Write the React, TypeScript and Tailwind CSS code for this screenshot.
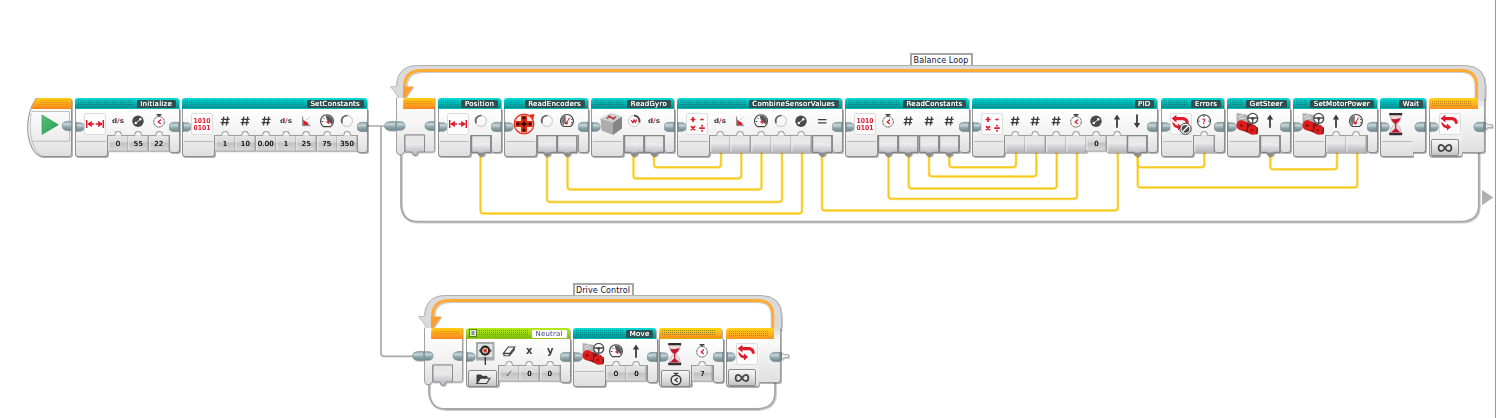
import type { ReactNode } from 'react';

type PortKind = 'value' | 'in' | 'out';
type Port = { icon: string; kind: PortKind; value?: string };
type Theme = 'teal' | 'green' | 'orange';
type BlockData = {
  x: number;
  y: number;
  w: number;
  title?: string;
  theme: Theme;
  main: string;
  ports: Port[];
  mode?: string;
};

const RED = '#e01b2c';
const INK = '#3c3c3c';

const v = (icon: string, value: string): Port => ({ icon, kind: 'value', value });
const i = (icon: string): Port => ({ icon, kind: 'in' });
const o = (icon: string): Port => ({ icon, kind: 'out' });

const TOP = 98;
const LOW = 328;

const blocks: BlockData[] = [
  { x: 75, y: TOP, w: 103.5, title: 'Initialize', theme: 'teal', main: 'range', ports: [v('ds', '0'), v('gain', '55'), v('timer', '22')] },
  { x: 182, y: TOP, w: 184.5, title: 'SetConstants', theme: 'teal', main: 'binary', ports: [v('hash', '1'), v('hash', '10'), v('hash', '0.00'), v('ds', '1'), v('angle', '25'), v('gauge', '75'), v('ring', '350')] },
  { x: 437.7, y: TOP, w: 63, title: 'Position', theme: 'teal', main: 'range', ports: [o('ring')] },
  { x: 504, y: TOP, w: 83.5, title: 'ReadEncoders', theme: 'teal', main: 'encoder', ports: [o('ring'), o('speed')] },
  { x: 590.5, y: TOP, w: 83, title: 'ReadGyro', theme: 'teal', main: 'gyro', ports: [o('rate'), o('ds')] },
  { x: 677, y: TOP, w: 164.5, title: 'CombineSensorValues', theme: 'teal', main: 'math', ports: [i('ds'), i('angle'), i('gauge'), i('ring'), i('gain'), o('equals')] },
  { x: 845, y: TOP, w: 124, title: 'ReadConstants', theme: 'teal', main: 'binary', ports: [o('timer'), o('hash'), o('hash'), o('hash')] },
  { x: 972, y: TOP, w: 185, title: 'PID', theme: 'teal', main: 'math', ports: [i('hash'), i('hash'), i('hash'), i('timer'), v('gain', '0'), i('up'), o('down')] },
  { x: 1160.7, y: TOP, w: 63, title: 'Errors', theme: 'teal', main: 'loopstop', ports: [i('question')] },
  { x: 1227, y: TOP, w: 62.5, title: 'GetSteer', theme: 'teal', main: 'steer', ports: [o('up')] },
  { x: 1293, y: TOP, w: 83.5, title: 'SetMotorPower', theme: 'teal', main: 'steer', ports: [i('up'), i('speed')] },
  { x: 1379.7, y: TOP, w: 46, title: 'Wait', theme: 'teal', main: 'hourglass', ports: [] },
  { x: 466, y: LOW, w: 103.5, title: 'Neutral', theme: 'green', main: 'display', mode: 'folder', ports: [v('eraser', '✓'), v('x', '0'), v('y', '0')] },
  { x: 573, y: LOW, w: 83, title: 'Move', theme: 'teal', main: 'steer', ports: [v('gauge', '0'), v('up', '0')] },
  { x: 659.3, y: LOW, w: 63, theme: 'orange', main: 'hourglass', mode: 'timer', ports: [v('timer', '7')] },
];

const wires: number[][] = [
  [480.5, 213.5, 802], [547, 202, 782], [567.5, 189.5, 761.5], [633.5, 178.5, 741.3], [654, 167.3, 721],
  [822, 210.5, 1117.8], [888.5, 198.8, 1077], [908.7, 188.5, 1056.7], [929, 176.5, 1036.3], [949.3, 167.3, 1016],
  [1137.7, 167.3, 1204.3], [1137.7, 187.5, 1357.3], [1270.3, 169.3, 1337],
];

const headerTheme: Record<Theme, string> = {
  teal: 'from-[#0adcd8] via-[#00b8b6] to-[#008f8f]',
  green: 'from-[#b6ea1c] via-[#9edb18] to-[#78bb0c]',
  orange: 'from-[#ffd800] via-[#ffb81a] to-[#ff8a18]',
};

function Tile({ children }: { children?: ReactNode }) {
  return (
    <>
      <rect x="0.5" y="0.5" width="21" height="21" rx="1.5" fill="#fdfdfd" stroke="#d4d4d4" strokeWidth="0.8" />
      {children}
    </>
  );
}

function LoopArrows() {
  return (
    <g fill={RED}>
      <path d="M6.4 1.8 V4 H13.5 Q18.8 4.6 18.8 10.8 L16 10.8 Q15.6 7.4 13 7.2 H6.4 V9.4 L1.6 5.6 Z" />
      <path d="M2 8.8 L4.6 10.6 Q5.4 12.4 8 12.6 V10.4 L12 14 L8 17.4 V15.4 Q3.4 15.2 2 8.8 Z" />
    </g>
  );
}

function MainIcon({ name }: { name: string }) {
  let art: ReactNode = null;
  if (name === 'range')
    art = (
      <Tile>
        <g stroke={RED} strokeWidth="1.5" fill="none">
          <path d="M2.7 7 V15 M19.3 7 V15 M4 11 H10.2 M11.8 11 H18" />
        </g>
        <path d="M3.4 11 L7.8 7.8 V14.2 Z M18.6 11 L14.2 7.8 V14.2 Z" fill={RED} />
      </Tile>
    );
  if (name === 'binary')
    art = (
      <Tile>
        <text x="11" y="9.7" textAnchor="middle" fontSize="6.8" fontWeight="700" fill={RED} textLength="17" lengthAdjust="spacingAndGlyphs">1010</text>
        <text x="11" y="17.3" textAnchor="middle" fontSize="6.8" fontWeight="700" fill={RED} textLength="17" lengthAdjust="spacingAndGlyphs">0101</text>
      </Tile>
    );
  if (name === 'math')
    art = (
      <Tile>
        <g stroke={RED} strokeWidth="1.7">
          <path d="M4.5 6.5 H9.5 M7 4 V9 M14.3 6.5 H17.7 M5 13.2 L9 17.2 M9 13.2 L5 17.2 M13.2 15.2 H18.8" />
        </g>
        <circle cx="16" cy="12.7" r="1" fill={RED} />
        <circle cx="16" cy="17.7" r="1" fill={RED} />
      </Tile>
    );
  if (name === 'encoder')
    art = (
      <>
        <circle cx="11" cy="11" r="9.8" fill="#fbe2da" stroke="#e5311d" strokeWidth="1.3" />
        <path d="M8 2.4 H14 V8 H19.6 V14 H14 V19.6 H8 V14 H2.4 V8 H8 Z" fill="#e52b13" />
        <g fill="#3a0a06">
          <circle cx="11" cy="4.9" r="1.7" />
          <circle cx="4.9" cy="11" r="1.7" />
          <circle cx="17.1" cy="11" r="1.7" />
          <circle cx="11" cy="17.1" r="1.7" />
          <circle cx="11" cy="11" r="2.1" />
          <path d="M10.4 7.4 H11.6 V10.4 H14.6 V11.6 H11.6 V14.6 H10.4 V11.6 H7.4 V10.4 H10.4 Z" />
        </g>
        <path d="M16.2 1.8 L21.5 1 L20.2 6.6 Z" fill="#e52b13" />
      </>
    );
  if (name === 'gyro')
    art = (
      <>
        <path d="M0.5 5.5 L11 0 L22 3.5 L13 9.5 Z" fill="#cfcfcf" />
        <path d="M0.5 5.5 L13 9.5 V22 L1.5 17.5 Z" fill="#adadad" />
        <path d="M13 9.5 L22 3.5 V15.5 L13 22 Z" fill="#858585" />
        <path d="M7 5.8 Q8 3 11 4.6 T16 3.6 M8.5 2.4 L14 6.4" stroke="#b52a2a" strokeWidth="1.2" fill="none" />
      </>
    );
  if (name === 'steer')
    art = (
      <>
        <path d="M0.5 0 L4 0.5 L12 2 L13 10 L6 13 L0.5 13 Z" fill="#b2b2b2" />
        <path d="M2 4 L7 2 M3 6 L9 4.5" stroke="#e9e9e9" strokeWidth="1" />
        <path d="M5 7.6 L11.6 9.6 L19.5 12.4 L20.5 20.5 L15 21 L5.5 17.2 Z" fill="#7f1717" />
        <path d="M6.4 8 L11.5 9.6 Q13 13 11.4 17.6 L6 17.4 Z" fill="#c62020" />
        <ellipse cx="5.4" cy="12.4" rx="5" ry="5.1" fill="#e01c1c" />
        <circle cx="5.2" cy="12.4" r="1.6" fill="#a01010" />
        <path d="M11.8 11 V18.4" stroke="#4b1a1a" strokeWidth="1" />
        <path d="M17 12.4 L21.4 14 Q22.6 17.6 21 21.6 L16.4 21.4 Z" fill="#b41c1c" />
        <ellipse cx="16.2" cy="17" rx="4.5" ry="4.7" fill="#e01c1c" />
        <circle cx="15.8" cy="17.2" r="1.5" fill="#a01010" />
        <path d="M21 14.5 Q22.2 17.8 20.8 21" stroke="#4b1a1a" strokeWidth="1" fill="none" />
        <g fill="none" stroke="#4a4a4a" strokeWidth="1.3">
          <circle cx="16.7" cy="5.4" r="5" fill="#fff" fillOpacity="0.85" />
          <path d="M12 5 H21.4 M16.7 5.6 V10" />
        </g>
        <circle cx="16.7" cy="5.5" r="1.5" fill="#4a4a4a" />
      </>
    );
  if (name === 'hourglass')
    art = (
      <g transform="translate(-4 0)">
        <rect x="4.2" y="0" width="13" height="2.6" rx="0.6" fill="#2e2e2e" />
        <rect x="4.2" y="19.6" width="13" height="2.6" rx="0.6" fill="#2e2e2e" />
        <path d="M5.4 2.6 H16 Q16 8.5 11.6 11 Q16 14 16 19.6 H5.4 Q5.4 14 9.9 11 Q5.4 8.5 5.4 2.6 Z" fill="#f2dddd" stroke="#b9a6a6" strokeWidth="0.7" />
        <path d="M6 5.5 Q10 7 15.5 5 Q14.5 9 11.3 10.8 V15.5 L15.6 19.5 H5.8 L10.1 15.5 V10.8 Q7 9 6 5.5 Z" fill="#c41632" />
      </g>
    );
  if (name === 'loop') art = <Tile><LoopArrows /></Tile>;
  if (name === 'loopstop')
    art = (
      <Tile>
        <LoopArrows />
        <circle cx="15.5" cy="15.8" r="5.6" fill="#fff" stroke="#3a3a3a" strokeWidth="1" />
        <circle cx="15.5" cy="15.8" r="3.9" fill="#4b4b4b" />
        <path d="M12.6 18.8 L18.4 12.8" stroke="#fff" strokeWidth="1.3" />
      </Tile>
    );
  if (name === 'display')
    art = (
      <>
        <rect x="1" y="-1" width="18.5" height="18.5" fill="#a4a9ac" />
        <rect x="3" y="1" width="14.5" height="13" fill="#dfe3e5" />
        <circle cx="10.2" cy="7.6" r="5.1" fill="#262626" />
        <path d="M4.2 7.6 H16.4" stroke="#262626" strokeWidth="1.6" />
        <circle cx="10.2" cy="7.6" r="2.9" fill="#f3ece9" />
        <rect x="8.5" y="5.7" width="3.4" height="3.8" rx="0.5" fill="#e53322" />
        <path d="M10.3 14 V22" stroke="#222" strokeWidth="1.2" />
      </>
    );
  return (
    <svg className="block h-[22px] w-[22px] shrink-0 overflow-visible font-['DejaVu_Sans',sans-serif]" viewBox="0 0 22 22">
      {art}
    </svg>
  );
}

function PortIcon({ name }: { name: string }) {
  let art: ReactNode = null;
  if (name === 'ds')
    art = (
      <text x="8" y="10.3" textAnchor="middle" fontSize="6.6" fontWeight="700" fill={INK} textLength="12" lengthAdjust="spacingAndGlyphs">
        d<tspan fill={RED}>/</tspan>s
      </text>
    );
  if (name === 'hash')
    art = <path d="M6.8 3.6 L5.4 12.4 M10.8 3.6 L9.4 12.4 M4.1 6.4 H12.6 M3.6 9.6 H12" stroke={INK} strokeWidth="1.4" />;
  if (name === 'equals') art = <path d="M4 6.6 H12.4 M4 9.8 H12.4" stroke={INK} strokeWidth="1.3" />;
  if (name === 'x' || name === 'y')
    art = <text x="8.3" y="11" textAnchor="middle" fontSize="10" fontWeight="700" fill={INK}>{name}</text>;
  if (name === 'up') art = <path d="M8 1.6 L11.2 6.6 H8.9 V14.8 H7.1 V6.6 H4.8 Z" fill={INK} />;
  if (name === 'down') art = <path d="M8 15 L11.2 10 H8.9 V1.4 H7.1 V10 H4.8 Z" fill={INK} />;
  if (name === 'gain')
    art = (
      <>
        <circle cx="8" cy="8.2" r="5.7" fill="#4a4a4a" />
        <path d="M5.6 10.3 L10.4 6.2" stroke="#fff" strokeWidth="0.9" />
        <circle cx="5.8" cy="10" r="1.2" fill="#fff" />
        <circle cx="10.3" cy="6.3" r="1.2" fill="#fff" />
      </>
    );
  if (name === 'timer')
    art = (
      <>
        <circle cx="8" cy="8.8" r="5.3" fill="#fff" stroke="#6a6462" strokeWidth="1" strokeDasharray="2.6 0.5" />
        <path d="M5.6 1.8 H10.4 M8 2 V3.8" stroke={INK} strokeWidth="1.4" />
        <path d="M10 6.6 L7.2 9 L9.8 11" stroke={RED} strokeWidth="1.3" fill="none" />
      </>
    );
  if (name === 'angle')
    art = (
      <>
        <path d="M4.6 3.4 V12.6 H12.2" stroke="#777" strokeWidth="0.9" fill="none" />
        <path d="M5.2 12 V6.2 L7.4 8.6 Q10.2 9 10.6 12 Z" fill={RED} />
        <path d="M8.6 7 L11.6 3.8" stroke="#999" strokeWidth="0.8" strokeDasharray="1.2 0.8" />
      </>
    );
  if (name === 'gauge')
    art = (
      <>
        <path d="M4.4 13.6 A6.5 6.5 0 1 1 11.6 13.6 Z" fill="#f9f9f9" stroke="#474747" strokeWidth="1.1" />
        <path d="M8 7.6 L6.6 2.6 A6 6 0 0 1 13 11.4 Z" fill="#555" />
        <path d="M6.4 5.6 L12.4 12.6 L8.2 10.6 Z" fill="#fff" />
        <path d="M6.8 8.8 L9.6 7.8 L10.4 11.4 Z" fill={RED} />
        <path d="M2.6 8.5 H4.4 M4.4 4.8 L5.4 6" stroke={INK} strokeWidth="0.9" />
      </>
    );
  if (name === 'speed')
    art = (
      <>
        <path d="M4.5 13.5 A6.5 6.5 0 1 1 11.5 13.5 Z" fill="#f7f7f7" stroke="#474747" strokeWidth="1.2" />
        <path d="M2.2 8 A6 6 0 0 1 6.8 2.5 L6.8 8 L4.4 12.4 Z" fill="#777" />
        <path d="M7.6 9.6 L10.6 4.6" stroke={RED} strokeWidth="1" />
        <circle cx="7.4" cy="10" r="1.5" fill={RED} />
        <path d="M12 6.8 L13.4 6 M12 9.6 L13.6 9.8" stroke={INK} strokeWidth="0.9" />
      </>
    );
  if (name === 'ring')
    art = (
      <g fill="none">
        <circle cx="8" cy="8" r="5.5" stroke="#d4d4d4" strokeWidth="1.4" />
        <path d="M3 10.2 A5.5 5.5 0 0 1 8.4 2.5" stroke="#5e5e5e" strokeWidth="1.7" />
      </g>
    );
  if (name === 'rate')
    art = (
      <>
        <circle cx="8" cy="8" r="5.5" fill="#fff" stroke="#c6c6c6" strokeWidth="1" />
        <path d="M8 2.5 A5.5 5.5 0 0 1 13.3 9.4" stroke="#4a4a4a" strokeWidth="1.9" fill="none" />
        <path d="M5 7 L6.8 9.8 L8 6.8 L9.4 9.4 L10.8 6.6" stroke={RED} strokeWidth="1.2" fill="none" />
      </>
    );
  if (name === 'question')
    art = (
      <>
        <circle cx="8" cy="8.2" r="6.5" fill="#fff" stroke="#444" strokeWidth="1.1" />
        <path d="M8 1.6 V4 M8 12.6 V14.8 M1.5 8.2 H3.6 M12.4 8.2 H14.5" stroke="#444" strokeWidth="1" />
        <text x="8" y="10.9" textAnchor="middle" fontSize="7.4" fontWeight="700" fill={RED}>?</text>
      </>
    );
  if (name === 'eraser')
    art = (
      <>
        <path d="M2.4 10.4 L7.4 4 H13.8 L8.8 10.4 Z" fill="#fff" stroke={INK} strokeWidth="1.1" />
        <path d="M2.4 10.4 H8.8 L13.8 4 V7 L8.8 13.2 H2.4 Z" fill="#4a4a4a" />
        <path d="M3.4 11.2 H8 V12.3 H3.4 Z" fill="#fff" />
      </>
    );
  return (
    <svg className="block h-4 w-4 shrink-0 overflow-visible font-['DejaVu_Sans',sans-serif]" viewBox="0 0 16 16">
      {art}
    </svg>
  );
}

function PortSocket({ kind }: { kind: PortKind }) {
  if (kind === 'out')
    return (
      <svg className="block h-[30px] w-full overflow-visible" viewBox="0 0 20.3 30" preserveAspectRatio="none">
        <path d="M0.6 5.6 H19.7 V22.3 H13.8 L12.8 24.6 Q10.2 27.4 7.6 24.6 L6.6 22.3 H0.6 Z" fill="url(#cell)" stroke="#868686" strokeWidth="1.2" />
        <path d="M6.8 22.4 L8 24.8 Q10.2 27 12.4 24.8 L13.6 22.4 Z" fill="#8d8d8d" />
      </svg>
    );
  return (
    <svg className="block h-[30px] w-full overflow-visible" viewBox="0 0 20.3 30" preserveAspectRatio="none">
      <rect x="0.2" y="5.8" width="20" height={kind === 'in' ? 16.7 : 15} fill={kind === 'in' ? 'url(#cell)' : 'url(#valuecell)'} />
      <path d="M0 5.6 H6 Q7.2 5.4 7.2 3.6 Q7.4 1.6 10.1 1.6 Q12.9 1.6 13.1 3.6 Q13.1 5.4 14.3 5.6 H20.3" fill="#fafafa" stroke="#9d9d9d" strokeWidth="1" />
      <path d={kind === 'in' ? 'M0.9 6.2 V22' : 'M0.9 6.2 V20.4'} stroke="#f4f4f4" strokeWidth="0.8" />
      <path d={kind === 'in' ? 'M20.1 5.6 V22.5' : 'M20.1 5.6 V20.8'} stroke="#8e8e8e" strokeWidth="1" />
      <path d={kind === 'in' ? 'M0 22.5 H20.3' : 'M0 20.8 H20.3'} stroke="#b4b4b4" strokeWidth="0.7" />
    </svg>
  );
}

function Plug({ side }: { side: 'left' | 'right' }) {
  return (
    <svg className="block h-[10px] w-[10px] shrink-0 overflow-visible" viewBox="0 0 10 10">
      {side === 'left' ? (
        <>
          <path d="M0 0.8 H4 Q8.2 1 8.2 5 Q8.2 9 4 9.2 H0 Z" fill="url(#plug)" stroke="#7c9196" strokeWidth="0.7" />
          <path d="M0 0 V10" stroke="#6f8084" strokeWidth="1" />
        </>
      ) : (
        <>
          <path d="M10 0.4 H5 Q0 0.6 0 5 Q0 9.4 5 9.6 H10 Z" fill="url(#plug)" stroke="#7c9196" strokeWidth="0.8" />
          <path d="M10 0 V10" stroke="#6f8084" strokeWidth="1" />
        </>
      )}
    </svg>
  );
}

function Header({ theme, title, icon }: { theme: Theme; title?: string; icon?: boolean }) {
  return (
    <div className={`flex h-[11px] items-center rounded-t-[3px] border-b border-black/15 bg-gradient-to-b pl-[3px] pr-[3px] ${headerTheme[theme]}`}>
      {icon && (
        <svg className="mr-[2px] h-[8px] w-[8px]" viewBox="0 0 8 8">
          <rect x="0.5" y="0.5" width="7" height="7" fill="#e5f2c9" stroke="#5b7f29" />
          <path d="M2.2 3 H5.8 M2.2 5 H5.8 M4 2 V6" stroke="#567" strokeWidth="0.8" />
        </svg>
      )}
      <div className="mb-px mr-[3px] h-[6px] flex-1 bg-[linear-gradient(rgba(0,50,50,0.38)_1px,transparent_1px)] bg-[size:100%_2px] [mask-image:linear-gradient(90deg,#000_1px,transparent_1px)] [mask-size:2px_100%]" />
      {title && (
        <div
          className={
            theme === 'green'
              ? 'mt-[2px] flex h-[8px] items-center rounded-[1px] bg-white px-[4px] text-[7px] leading-none tracking-[0.15px] text-[#3d4a80]'
              : 'mt-[2px] flex h-[8px] items-center rounded-[1.5px] bg-[#2f504f] pl-[3.5px] pr-[3.5px] text-[7px] leading-none tracking-[0.25px] text-white [text-shadow:0_0_0.5px_#fff]'
          }
        >
          {title}
        </div>
      )}
    </div>
  );
}

function ModeButton({ mode }: { mode: string }) {
  return (
    <div className="mt-[2px] flex h-[17px] items-center justify-center rounded-[2px] border border-[#8b8b8b] bg-gradient-to-b from-[#f6f6f6] via-[#e2e2e2] to-[#c4c4c4]">
      <svg className="h-[14px] w-[18px]" viewBox="0 0 18 14">
        {mode === 'folder' && (
          <>
            <path d="M3 11.5 V3 H7 L8.4 4.4 H13 V6" fill="#3c3c3c" stroke="#3c3c3c" />
            <path d="M3 11.5 L6.4 6.2 H16 L12.6 11.5 Z" fill="#e8e8e8" stroke="#3c3c3c" strokeWidth="1.1" />
          </>
        )}
        {mode === 'timer' && (
          <>
            <circle cx="9" cy="8" r="4.8" fill="#eee" stroke="#3c3c3c" strokeWidth="1.5" />
            <path d="M6.6 1.4 H11.4 M9 1.4 V3.4 M10.8 5.8 L8 8 L10.8 10" fill="none" stroke="#3c3c3c" strokeWidth="1.4" />
          </>
        )}
        {mode === 'infinity' && (
          <path d="M9 7 C7.4 4.4 6.4 3.8 5.3 3.8 C3.4 3.8 2.6 5.2 2.6 7 S3.4 10.2 5.3 10.2 C6.4 10.2 7.4 9.6 9 7 C10.6 4.4 11.6 3.8 12.7 3.8 C14.6 3.8 15.4 5.2 15.4 7 S14.6 10.2 12.7 10.2 C11.6 10.2 10.6 9.6 9 7 Z" fill="none" stroke="#444" strokeWidth="1.7" />
        )}
      </svg>
    </div>
  );
}

function Block({ b }: { b: BlockData }) {
  return (
    <div className="absolute drop-shadow-[1px_1px_0.6px_rgba(0,0,0,0.3)]" style={{ left: b.x, top: b.y, width: b.w }}>
      <Header theme={b.theme} title={b.title} icon={b.theme === 'green'} />
      <div className="flex items-start">
        <div className="h-[48px] w-[33px] shrink-0">
          <div className="flex h-[26px] items-start border-l border-[#9a9a9a] bg-gradient-to-b from-white to-[#f1f1f1] pt-[4px]">
            <div className="mt-[9px] w-[8px] shrink-0"><Plug side="left" /></div>
            <MainIcon name={b.main} />
          </div>
          <div className={`h-[22px] border-b border-l border-[#8f8f8f] bg-gradient-to-b from-[#f1f1f1] to-[#dedede] pt-[3px] ${b.ports.length ? 'rounded-b-[3px] border-r' : 'rounded-bl-[3px]'}`}>
            {b.mode ? <div className="px-px"><ModeButton mode={b.mode} /></div> : <div className="mx-px mt-[3px] h-px bg-[#b9b9b9]" />}
          </div>
        </div>
        {b.ports.map((p, k) => (
          <div key={k} className="relative h-[48px] w-[20.33px] shrink-0">
            <div className="flex h-[26px] justify-center bg-gradient-to-b from-white to-[#f1f1f1] pt-[4px]">
              <PortIcon name={p.icon} />
            </div>
            <div className="-mt-[5px]"><PortSocket kind={p.kind} /></div>
            {p.value && (
              <div
                className={
                  p.value === '✓'
                    ? 'absolute inset-x-0 top-[29px] text-center text-[10px] font-bold leading-[11px] text-[#6c6c6c]'
                    : 'absolute inset-x-0 top-[31px] overflow-hidden whitespace-nowrap text-center text-[7px] leading-[8px] tracking-[0.2px] text-[#111] [text-shadow:0_0_0.4px_#111]'
                }
              >
                {p.value}
              </div>
            )}
          </div>
        ))}
        <div className="flex-1">
          <div className="flex h-[26px] justify-end border-r border-[#8f8f8f] bg-gradient-to-b from-white to-[#f1f1f1] pt-[13px]">
            <Plug side="right" />
          </div>
          <div className={`h-[18px] border-b border-r border-[#8f8f8f] bg-gradient-to-b from-[#f1f1f1] to-[#dedede] ${b.ports.length ? 'rounded-b-[3px] border-l' : 'rounded-br-[3px]'}`} />
        </div>
      </div>
    </div>
  );
}

function StartBlock() {
  return (
    <svg className="absolute left-[26px] top-[96px] h-[64px] w-[50px] drop-shadow-[1px_1px_0.6px_rgba(0,0,0,0.3)]" viewBox="26 96 50 64">
      <path d="M36 98.5 H69 Q71.5 98.5 71.5 101 V154 Q71.5 156.5 69 156.5 H43 Q36 156 32 148 Q27 138 27.8 124 Q28.8 109 36 98.5 Z" fill="url(#body)" stroke="#8f8f8f" strokeWidth="1" />
      <path d="M38 98 H69.5 Q71.5 98.2 71.5 100.5 V109 H31.4 Q33 101 38 98 Z" fill="url(#orange)" />
      <path d="M41 100.5 H69 M40 102.5 H69 M39 104.5 H69" stroke="#b06a00" strokeOpacity="0.4" strokeWidth="0.9" strokeDasharray="1 1" />
      <path d="M31.5 111.5 H69.5 V141.3 H31.5" fill="none" stroke="#b4b4b4" strokeWidth="0.8" />
      <path d="M31.2 113 Q29 124 31 136 Q33 149 40 155" fill="none" stroke="#bdbdbd" strokeWidth="0.9" />
      <path d="M42 115 L58.4 124.8 L42 134.4 Z" fill="url(#play)" stroke="#2f9150" strokeWidth="0.6" />
      <path d="M71.5 121.4 H67.5 Q62.3 121.6 62.3 126 Q62.3 130.4 67.5 130.6 H71.5 Z" fill="url(#plug)" stroke="#7c9196" strokeWidth="0.8" />
    </svg>
  );
}

type LoopProps = { x: number; y: number; right: number; bottom: number; label: string; labelX: number; labelW: number; endX: number };

function Loop({ x, y, right, bottom, label, labelX, labelW, endX }: LoopProps) {
  const h = y + 33;
  const r = right;
  return (
    <>
      <svg className="absolute left-0 top-0 h-[418px] w-[1496px] drop-shadow-[1px_1px_0.6px_rgba(0,0,0,0.2)]" viewBox="0 0 1496 418">
        <path d={`M${x + 4.5} ${y + 88} V${bottom - 16} Q${x + 6} ${bottom} ${x + 21} ${bottom} H${r - 24} Q${r - 6.5} ${bottom - 1} ${r - 6.5} ${bottom - 16} V${y + 86}`} fill="none" stroke="#a8a8a8" strokeWidth="1.8" />
        <path d={`M${x} ${h + 2} V${y + 21} Q${x + 1} ${y + 0.5} ${x + 21} ${y + 0.5} H${r - 20} Q${r} ${y + 1} ${r} ${y + 21} V${h + 2} H${r - 11} V${y + 22} Q${r - 11} ${y + 7} ${r - 25} ${y + 7} H${x + 26} Q${x + 10} ${y + 7} ${x + 10} ${y + 22} V${h + 2} Z`} fill="#dadada" />
        <path d={`M${x} ${y + 21} Q${x + 1} ${y + 0.5} ${x + 21} ${y + 0.5} H${r - 20} Q${r} ${y + 1} ${r} ${y + 21} V${h}`} fill="none" stroke="#aeaeae" strokeWidth="1" />
        <path d={`M${x + 8} ${h} V${y + 22} Q${x + 8} ${y + 5.5} ${x + 25} ${y + 5.5} H${r - 24} Q${r - 8.7} ${y + 5.5} ${r - 8.7} ${y + 21} V${h + 2}`} fill="none" stroke="#ffab36" strokeWidth="3" />
        <path d={`M${x - 6} ${y + 21.5} H${x + 6.5} V${h - 1} L${x + 2} ${h - 1} Z`} fill="#dadada" />
        <path d={`M${x} ${y + 21.5} H${x - 6} L${x + 2} ${h - 1}`} fill="none" stroke="#b8b8b8" strokeWidth="0.8" />
        <path d={`M${x + 6.5} ${y + 21.5} H${x + 17} L${x + 8} ${h + 1} H${x + 6.5} Z`} fill="#fba02e" />
        <path d={`M${x} ${h} V${y + 86} Q${x} ${y + 89.5} ${x + 3} ${y + 89.5} H${x + 5} L${x + 8} ${y + 86.5} V${y + 70} H${x + 28} V${y + 87} H${x + 36} Q${x + 38} ${y + 87} ${x + 38} ${y + 84} V${h}`} fill="url(#body)" stroke="#989898" strokeWidth="0.9" />
        <path d={`M${x + 6.6} ${h + 11} V${h + 2} Q${x + 6.6} ${h} ${x + 9} ${h} H${x + 36} Q${x + 38.4} ${h} ${x + 38.4} ${h + 2.4} V${h + 11} Z`} fill="url(#orange)" />
        <path d={`M${x + 9} ${h + 3.5} H${x + 34} M${x + 9} ${h + 5.5} H${x + 34}`} stroke="#a36200" strokeOpacity="0.45" strokeWidth="1" strokeDasharray="1 1" />
        <path d={`M${x + 8.5} ${y + 70} H${x + 28} V${y + 87} H${x + 21.5} L${x + 20.8} ${y + 89.5} Q${x + 18.5} ${y + 91.8} ${x + 16.2} ${y + 89.5} L${x + 15.5} ${y + 87} H${x + 8.5} Z`} fill="url(#cell)" stroke="#8b8b8b" />
        <path d={`M${x} ${y + 56.8} H${x + 4} Q${x + 8.5} ${y + 57} ${x + 8.5} ${y + 61} Q${x + 8.5} ${y + 65} ${x + 4} ${y + 65.2} H${x} Z M${x - 1} ${y + 56.6} H${x - 6} Q${x - 12} ${y + 57} ${x - 12} ${y + 61} Q${x - 12} ${y + 65} ${x - 6} ${y + 65.4} H${x - 1} Z M${x + 38} ${y + 56.6} H${x + 34} Q${x + 28.5} ${y + 57} ${x + 28.5} ${y + 61} Q${x + 28.5} ${y + 65} ${x + 34} ${y + 65.4} H${x + 38} Z`} fill="url(#plug)" stroke="#7c9196" strokeWidth="0.8" />
        <path d={`M${r} ${y + 57.4} L${r + 2.6} ${y + 59.6} H${r + 7} V${y + 62.6} H${r + 2.6} L${r} ${y + 64.8} Z`} stroke="#a0a0a0" strokeWidth="0.9" fill="#efefef" />
      </svg>
      <div className="absolute flex items-center justify-center whitespace-nowrap rounded-t-[1px] border-x-2 border-b border-t-2 border-x-[#a6a6a6] border-b-[#b4b4b4] border-t-[#a6a6a6] bg-white pt-px text-[8px] leading-none tracking-[0.1px] text-[#10103a]" style={{ left: labelX - 0.5, top: y - 12, width: labelW + 2, height: 13 }}>
        {label}
      </div>
      <div className="absolute drop-shadow-[1px_1px_0.6px_rgba(0,0,0,0.3)]" style={{ left: endX, top: h, width: right - endX }}>
        <div className="flex h-[11px]">
          <div className="flex-1 rounded-tl-[3px] bg-gradient-to-b from-[#ffd21a] to-[#ff921e] pl-[3px] pr-[6px] pt-[3px]">
            <div className="h-[6px] bg-[linear-gradient(rgba(110,60,0,0.4)_1px,transparent_1px)] bg-[size:100%_2px] [mask-image:linear-gradient(90deg,#000_1px,transparent_1px)] [mask-size:2px_100%]" />
          </div>
          <div className="w-[7px] border-r border-[#a4a4a4] bg-gradient-to-b from-[#dadada] to-[#f6f6f6]" />
        </div>
        <div className="flex items-start">
          <div className="h-[48px] w-[33px] shrink-0">
            <div className="flex h-[26px] border-l border-[#9a9a9a] bg-gradient-to-b from-white to-[#f1f1f1] pt-[4px]">
              <div className="mt-[9px] w-[9px] shrink-0"><Plug side="left" /></div>
              <MainIcon name="loop" />
            </div>
            <div className="h-[22px] rounded-b-[3px] border-b border-l border-[#8f8f8f] bg-gradient-to-b from-[#f1f1f1] to-[#dedede] pl-px pr-[3px] pt-[2px]">
              <ModeButton mode="infinity" />
            </div>
          </div>
          <div className="flex h-[44px] flex-1 justify-end rounded-br-[3px] border-b border-r border-[#9a9a9a] bg-gradient-to-b from-[#fbfbfb] to-[#e0e0e0] pt-[13px]">
            <Plug side="right" />
          </div>
        </div>
      </div>
    </>
  );
}

function Defs() {
  return (
    <svg className="absolute h-0 w-0">
      <defs>
        <linearGradient id="cell" x1="0" y1="0" x2="0" y2="1">
          <stop offset="0" stopColor="#e6e6e7" /><stop offset="0.45" stopColor="#e9e9ea" /><stop offset="0.65" stopColor="#d3d3d6" /><stop offset="1" stopColor="#b6b6bb" />
        </linearGradient>
        <linearGradient id="valuecell" x1="0" y1="0" x2="0" y2="1">
          <stop offset="0" stopColor="#e6e6e6" /><stop offset="0.4" stopColor="#dadada" /><stop offset="0.5" stopColor="#c2c2c2" /><stop offset="1" stopColor="#d9d9d9" />
        </linearGradient>
        <linearGradient id="plug" x1="0" y1="0" x2="0" y2="1">
          <stop offset="0" stopColor="#8fa5aa" /><stop offset="0.3" stopColor="#c6d7da" /><stop offset="0.6" stopColor="#8ea6ac" /><stop offset="1" stopColor="#6e878d" />
        </linearGradient>
        <linearGradient id="body" x1="0" y1="0" x2="0" y2="1">
          <stop offset="0" stopColor="#fdfdfd" /><stop offset="0.5" stopColor="#f4f4f4" /><stop offset="1" stopColor="#dedede" />
        </linearGradient>
        <linearGradient id="orange" x1="0" y1="0" x2="0" y2="1">
          <stop offset="0" stopColor="#ffcf10" /><stop offset="0.5" stopColor="#ffa81e" /><stop offset="1" stopColor="#fb8420" />
        </linearGradient>
        <linearGradient id="play" x1="0" y1="0" x2="1" y2="1">
          <stop offset="0" stopColor="#5cc27c" /><stop offset="1" stopColor="#1f9a4a" />
        </linearGradient>
      </defs>
    </svg>
  );
}

function wirePath([x1, y, x2]: number[]) {
  return `M${x1} 155 V${y - 3} Q${x1} ${y} ${x1 + 3} ${y} H${x2 - 3} Q${x2} ${y} ${x2} ${y - 3} V151`;
}

function Wires() {
  return (
    <svg className="absolute left-0 top-0 h-[418px] w-[1496px]" viewBox="0 0 1496 418">
      <path d="M367 126 H385 M381 126 V353 Q381 356.3 384 356.3 H413" fill="none" stroke="#a9a9a9" strokeWidth="1.7" />
      <g fill="none">
        {wires.map((w, k) => <path key={k} d={wirePath(w)} stroke="#fbe68f" strokeWidth="2.8" />)}
        {wires.map((w, k) => <path key={`c${k}`} d={wirePath(w)} stroke="#f8c91c" strokeWidth="1.5" />)}
      </g>
      <path d="M1482 190 L1493.3 197.6 L1482 205.2 Z" fill="#b0b0b0" />
      <path d="M1495.5 0 V418" stroke="#9b9b9b" strokeWidth="1" />
    </svg>
  );
}

export default function App() {
  return (
    <main className="relative h-[418px] w-[1496px] overflow-hidden bg-white font-['DejaVu_Sans',Verdana,sans-serif]">
      <Defs />
      <Loop x={396.5} y={65} right={1485.3} bottom={221.7} label="Balance Loop" labelX={910} labelW={61} endX={1429.3} />
      <Loop x={424.5} y={295} right={781.5} bottom={409} label="Drive Control" labelX={573} labelW={59} endX={725.7} />
      <Wires />
      <StartBlock />
      {blocks.map((b) => <Block key={`${b.x}-${b.y}`} b={b} />)}
    </main>
  );
}
